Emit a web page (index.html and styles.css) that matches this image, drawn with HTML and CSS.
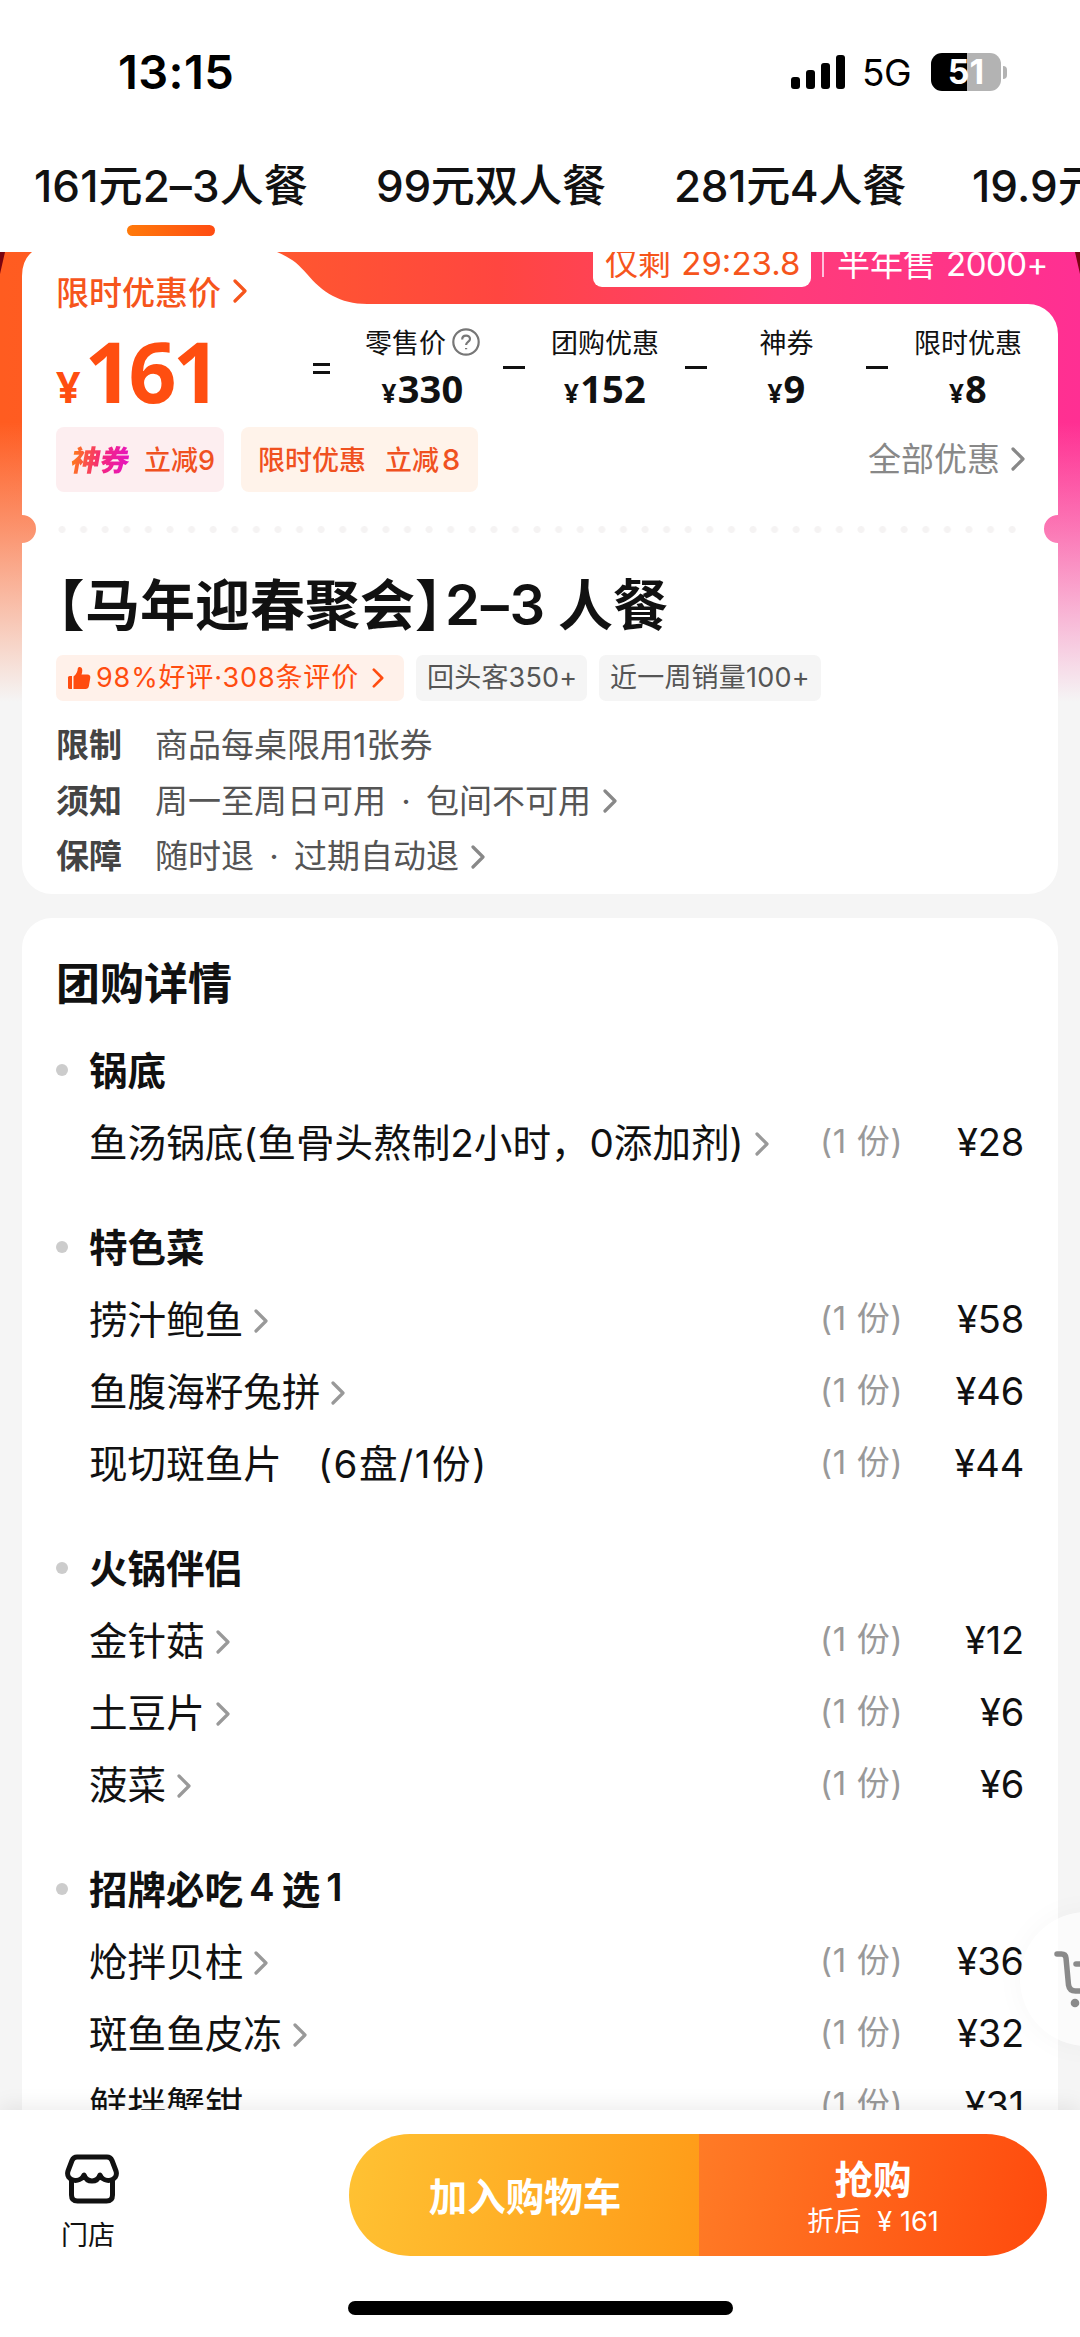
FILE: index.html
```html
<!DOCTYPE html>
<html lang="zh-CN">
<head>
<meta charset="utf-8">
<title>团购详情</title>
<link rel="stylesheet" href="styles.css">
</head>
<body>
<svg class="defs" width="0" height="0" aria-hidden="true">
  <symbol id="chev" viewBox="0 0 14 24"><path d="M2 2l10 10L2 22" fill="none" stroke="currentColor" stroke-width="3.2" stroke-linecap="round" stroke-linejoin="round"/></symbol>
</svg>
<div class="phone">
  <header class="status">
    <span class="time">13:15</span>
    <div class="status-right">
      <svg class="signal" viewBox="0 0 54 34"><rect x="0" y="22" width="9" height="12" rx="3"/><rect x="15" y="15" width="9" height="19" rx="3"/><rect x="30" y="8" width="9" height="26" rx="3"/><rect x="45" y="0" width="9" height="34" rx="3"/></svg>
      <span class="net">5G</span>
      <span class="battery">51</span><span class="nub"></span>
    </div>
  </header>
  <nav class="tabs">
    <span class="tab active">161元2–3人餐</span>
    <span class="tab t2">99元双人餐</span>
    <span class="tab t3">281元4人餐</span>
    <span class="tab t4">19.9元</span>
  </nav>

  <main class="content">
    <div class="corner left"></div><div class="corner right"></div>
    <div class="sale"><span class="count">仅剩 <b>29:23.8</b></span><span class="sold"><i></i>半年售 <b>2000+</b></span></div>
    <section class="deal">
      <div class="promo">限时优惠价<svg class="chev"><use href="#chev"/></svg></div>
      <div class="price-row">
        <div class="price"><small>¥</small>161</div>
        <span class="op eq"></span>
        <div class="part p1"><span>零售价<svg class="help" viewBox="0 0 28 28"><circle cx="14" cy="14" r="12.7"/><path d="M10.2 11.4c0-5 7.8-5 7.8-.5 0 3-3.900 3-3.900 6"/><path d="M14.1 20v1.2"/></svg></span><strong><small>¥</small>330</strong></div>
        <span class="op"></span>
        <div class="part p2"><span>团购优惠</span><strong><small>¥</small>152</strong></div>
        <span class="op"></span>
        <div class="part p3"><span>神券</span><strong><small>¥</small>9</strong></div>
        <span class="op"></span>
        <div class="part p4"><span>限时优惠</span><strong><small>¥</small>8</strong></div>
      </div>
      <div class="coupons">
        <span class="coupon pink"><em>神券</em><span>立减9</span></span>
        <span class="coupon peach"><span>限时优惠</span><span>立减<b>8</b></span></span>
        <span class="all">全部优惠<svg class="chev"><use href="#chev"/></svg></span>
      </div>
      <div class="dots"></div>
      <h1><span class="lb">【</span>马年迎春聚会<span class="rb">】</span><span class="num">2–3</span><span class="last">人餐</span></h1>
      <div class="tags">
        <span class="tag hot"><svg class="thumb" viewBox="0 0 24 24"><path d="M1 11.5q0-1.500 1.500-1.500H5v13H2.500Q1 23 1 21.500z"/><path d="M6.500 10.500C9.500 8 10.500 5.500 10.700 3c.2-2.800 4.600-2.700 4.600 1.200 0 1.600-.3 3-.8 4.300h6c2 0 3.100 1.400 2.800 3.300l-1.400 8.200c-.3 2-1.500 3-3.400 3h-12z"/></svg><span>98%好评·308条评价</span><svg class="chev"><use href="#chev"/></svg></span>
        <span class="tag g1">回头客350+</span>
        <span class="tag g2">近一周销量100+</span>
      </div>
      <dl class="rules">
        <div><dt>限制</dt><dd>商品每桌限用1张券</dd></div>
        <div><dt>须知</dt><dd>周一至周日可用<i>·</i>包间不可用<svg class="chev"><use href="#chev"/></svg></dd></div>
        <div><dt>保障</dt><dd>随时退<i>·</i>过期自动退<svg class="chev"><use href="#chev"/></svg></dd></div>
      </dl>
    </section>

    <section class="detail">
      <h2>团购详情</h2>
      <div class="group">
        <h3>锅底</h3>
        <div class="item"><span class="name">鱼汤锅底(鱼骨头熬制2小时，0添加剂)<svg class="chev"><use href="#chev"/></svg></span><span class="qty">(1 份)</span><span class="cost">¥28</span></div>
      </div>
      <div class="group">
        <h3>特色菜</h3>
        <div class="item"><span class="name">捞汁鲍鱼<svg class="chev"><use href="#chev"/></svg></span><span class="qty">(1 份)</span><span class="cost">¥58</span></div>
        <div class="item"><span class="name">鱼腹海籽兔拼<svg class="chev"><use href="#chev"/></svg></span><span class="qty">(1 份)</span><span class="cost">¥46</span></div>
        <div class="item"><span class="name">现切斑鱼片<span class="spec">(6盘/1份)</span></span><span class="qty">(1 份)</span><span class="cost">¥44</span></div>
      </div>
      <div class="group">
        <h3>火锅伴侣</h3>
        <div class="item"><span class="name">金针菇<svg class="chev"><use href="#chev"/></svg></span><span class="qty">(1 份)</span><span class="cost">¥12</span></div>
        <div class="item"><span class="name">土豆片<svg class="chev"><use href="#chev"/></svg></span><span class="qty">(1 份)</span><span class="cost">¥6</span></div>
        <div class="item"><span class="name">菠菜<svg class="chev"><use href="#chev"/></svg></span><span class="qty">(1 份)</span><span class="cost">¥6</span></div>
      </div>
      <div class="group">
        <h3>招牌必吃<span class="four">4</span>选<span class="one">1</span></h3>
        <div class="item"><span class="name">炝拌贝柱<svg class="chev"><use href="#chev"/></svg></span><span class="qty">(1 份)</span><span class="cost">¥36</span></div>
        <div class="item"><span class="name">斑鱼鱼皮冻<svg class="chev"><use href="#chev"/></svg></span><span class="qty">(1 份)</span><span class="cost">¥32</span></div>
        <div class="item"><span class="name">鲜拌蟹钳</span><span class="qty">(1 份)</span><span class="cost">¥31</span></div>
      </div>
    </section>
    <div class="cart"><svg viewBox="0 0 60 60"><path d="M3 5h4.500q4 0 4.500 4l2.500 27q1 6 7 6h22"/><path d="M22 15h30"/><circle cx="21" cy="54" r="4.300"/></svg></div>
  </main>

  <footer class="bar">
    <div class="shop">
      <svg viewBox="0 0 54 50"><path d="M12 3h30q3.500 0 5 3.500l4 10.500c3 10-12 13-16 4-3 8-13 8-16 0-4 9-19 6-16-4L7 6.500Q8.500 3 12 3z"/><path d="M6.500 25v16q0 6 6 6h29q6 0 6-6V25"/></svg>
      <span>门店</span>
    </div>
    <div class="buttons">
      <div class="btn add">加入购物车</div>
      <div class="btn buy"><strong>抢购</strong><span>折后<i>¥</i>161</span></div>
    </div>
  </footer>
  <div class="home"></div>
</div>
</body>
</html>
```
FILE: styles.css
```css
* { box-sizing: border-box; margin: 0; padding: 0; }
body { width: 1080px; height: 2337px; overflow: hidden; background: #fff; color: #111; font-family: Inter, "Noto Sans CJK SC", sans-serif; white-space: nowrap; }
i, em { font-style: normal; }
.defs { position: absolute; }
.phone { display: flex; flex-direction: column; height: 2337px; overflow: hidden; }
.chev { width: 14px; height: 24px; flex: none; }

.status { height: 144px; padding: 0 73px 0 118px; display: flex; align-items: center; justify-content: space-between; color: #000; }
.time { font-size: 47px; font-weight: 600; letter-spacing: .4px; padding-bottom: 1px; }
.status-right { display: flex; align-items: center; }
.signal { width: 54px; height: 34px; margin-right: 17px; }
.net { font-size: 37px; width: 52px; letter-spacing: -.5px; margin-right: 17px; }
.battery { width: 70px; height: 38px; border-radius: 11px; background: linear-gradient(90deg, #000 51%, #b3b3b3 51%); color: #fff; font-size: 34px; font-weight: 700; line-height: 38px; text-align: center; }
.nub { width: 4px; height: 13px; margin-left: 2px; border-radius: 0 4px 4px 0; background: #b3b3b3; }

.tabs { height: 108px; display: flex; gap: 70px; padding: 12px 0 0 34px; overflow: hidden; }
.tab { position: relative; flex: none; font-size: 44px; font-weight: 500; line-height: 60px; width: 272px; letter-spacing: .1px; }
.tab.t2, .tab.t3 { width: 228px; letter-spacing: -.3px; }
.tab.active::after { content: ""; position: absolute; left: 93px; bottom: 16px; width: 88px; height: 11px; border-radius: 6px; background: linear-gradient(90deg, #ff7a0a, #ff4c12); }

.content { position: relative; height: 1858px; overflow: hidden; padding: 0 22px; display: flex; flex-direction: column; gap: 24px;
  background: linear-gradient(rgba(245,245,245,0) 170px, rgba(245,245,245,.36) 277px, #f5f5f5 450px), linear-gradient(90deg, #ff5c20, #ff5a2c 22%, #ff4640 46%, #ff3c78 72%, #ff2f93 100%); background-color: #f5f5f5; background-size: 100% 450px; background-repeat: no-repeat; }
.corner { position: absolute; top: 0; width: 5px; height: 22px; background: #7a0410; }
.corner.left { left: 0; clip-path: polygon(0 0, 100% 0, 0 100%); }
.corner.right { right: 0; clip-path: polygon(0 0, 100% 0, 100% 100%); }
.sale { position: absolute; z-index: 1; top: -12px; left: 593px; display: flex; font-size: 33px; line-height: 48px; color: #fff; }
.sale b { font-weight: 400; }
.count { width: 218px; height: 47px; padding-left: 12px; border-radius: 9px; background: #fff; color: #f6551c; line-height: 46px; }
.count b { letter-spacing: 0; margin-left: 1px; }
.sold { display: flex; align-items: center; line-height: 46px; }
.sold i { width: 2px; height: 26px; margin: 0 13px 0 11px; background: #ffc0dc; }
.sold b { margin-left: 10px; letter-spacing: -.5px; }

.deal { flex: none; height: 642px; background: #fff; padding: 19px 33px 0 34px; display: flex; flex-direction: column;
  clip-path: path("M10 0H255C271 7 276 12 285 22C300 40 318 52 345 52H1006A30 30 0 0 1 1036 82V263A14 14 0 0 0 1036 291V612A30 30 0 0 1 1006 642H30A30 30 0 0 1 0 612V291A14 14 0 0 0 0 263V24Q0 8 10 0Z"); }
.promo { height: 40px; display: flex; align-items: center; gap: 12px; color: #f6551c; font-size: 33px; font-weight: 500; }
.price-row { height: 115px; display: flex; align-items: flex-start; }
.price-row > * { flex: none; }
.price { width: 257px; height: 115px; padding-top: 10px; color: #ff4e10; font: 700 84px/100px "Open Sans"; letter-spacing: -4px; }
.price small { font-size: 43px; margin-right: 4px; letter-spacing: 0; }
.op { width: 22px; height: 3px; margin-top: 55px; background: #111; }
.op.eq { width: 17px; height: 11px; margin-top: 52px; border: solid #111; border-width: 3px 0; background: none; }
.part { height: 100px; display: flex; flex-direction: column; align-items: center; padding-top: 11px; }
.part > span { display: flex; align-items: center; height: 40px; font-size: 27px; gap: 6px; }
.part strong { font: 700 38px/54px "Open Sans"; height: 54px; letter-spacing: .2px; }
.part small { font-size: 26px; margin-right: 1px; }
.p1 { width: 173px; padding-left: 12px; } .p2 { width: 160px; } .p3 { width: 159px; } .p4 { width: 160px; }
.help { width: 28px; height: 28px; fill: none; stroke: #777; stroke-width: 2.200; }

.coupons { height: 65px; margin-top: 1px; display: flex; align-items: center; color: #f0511f; }
.coupon { height: 65px; display: flex; align-items: center; border-radius: 8px; font-size: 27px; font-weight: 500; padding-bottom: 3px; }
.pink { width: 168px; background: #fdeef0; padding-left: 16px; margin-right: 17px; }
.pink em { width: 60px; font-size: 29px; font-weight: 900; transform: skewX(-10deg); background: linear-gradient(90deg, #ff7a1a, #f5267c 50%, #e413c8); -webkit-background-clip: text; color: transparent; margin-right: 12px; }
.peach { width: 237px; background: #fff3ea; padding-left: 17px; gap: 19px; }
.peach b { font-weight: 500; margin-left: 3px; font-size: 29px; }
.all { margin-left: auto; display: flex; align-items: center; gap: 11px; color: #888; font-size: 33px; padding-bottom: 5px; }
.all .chev { margin-top: 4px; }
.dots { height: 7px; margin-top: 34px; width: 966px; background: radial-gradient(circle at 4px 3.5px, #f5f3f3 3px, transparent 4px) 2px 0 / 21.6px 7px repeat-x; }

h1 { height: 80px; margin-top: 32px; display: flex; font-size: 55px; line-height: 80px; font-weight: 700; }
.lb, .rb { font-feature-settings: "halt"; width: 28px; }
.lb { margin-left: 1px; } .rb { width: 30px; }
.num { width: 113px; font-weight: 600; font-size: 56px; letter-spacing: .8px; }
.tags { margin-top: 10px; height: 46px; display: flex; gap: 12px; font-size: 27px; color: #555; }
.tag { height: 46px; line-height: 46px; padding-left: 11px; background: #f5f5f5; border-radius: 7px; letter-spacing: .2px; }
.hot { width: 348px; display: flex; align-items: center; background: #fff1ea; color: #ff4c10; }
.hot span { width: 276px; margin-left: 5px; letter-spacing: .85px; }
.hot .chev { height: 20px; width: 12px; }
.thumb { width: 24px; height: 24px; fill: #ff4c10; }
.g1 { width: 171px; } .g2 { width: 222px; }
.rules { margin-top: 17px; font-size: 33px; color: #555; }
.rules div { display: flex; height: 55.500px; line-height: 55.500px; }
dt { width: 99px; font-weight: 600; color: #444; font-size: 33px; }
dd { display: flex; align-items: center; }
dd i { width: 40px; text-align: center; }
dd .chev { margin-left: 12px; color: #888; }

.detail { flex: none; height: 1260px; border-radius: 30px; background: #fff; padding: 36px 34px 0 34px; }
h2 { font-size: 44px; line-height: 60px; font-weight: 700; }
.group { padding-top: 21px; margin-bottom: 12px; }
h3 { display: flex; align-items: center; height: 72px; font-size: 38.500px; font-weight: 700; padding-bottom: 6px; }
h3::before { content: ""; width: 12px; height: 12px; border-radius: 50%; background: #ccc; margin: 3px 21px 0 0; }
.four { margin: 0 7px 0 6px; font-weight: 600; } .one { margin-left: 6px; font-weight: 600; }
.item { height: 72px; display: flex; align-items: center; padding: 0 0 6px 33px; font-size: 38.600px; }
.name { display: flex; align-items: center; flex: 1; }
.name .chev { margin: 7px 0 0 11px; color: #999; }
.spec { margin-left: 36px; letter-spacing: 1.600px; }
.qty { width: 83px; font-size: 33px; color: #999; padding-bottom: 2px; letter-spacing: .7px; }
.cost { width: 121px; text-align: right; font-size: 38px; letter-spacing: -.2px; padding-top: 3px; }
.cart { position: absolute; left: 1020px; top: 1660px; width: 134px; height: 134px; border-radius: 50%; background: rgba(255,255,255,.6); box-shadow: 0 0 30px rgba(0,0,0,.035); }
.cart svg { position: absolute; left: 34px; top: 37px; width: 60px; height: 60px; fill: none; stroke: #8a8a8a; stroke-width: 5.500; stroke-linecap: round; }
.cart circle { fill: #8a8a8a; stroke: none; }

.bar { height: 170px; position: relative; background: #fff; display: flex; padding: 24px 33px 0 61px; justify-content: space-between; box-shadow: 0 -4px 20px rgba(0,0,0,.08); clip-path: inset(-30px 0 0 0); }
.shop { width: 60px; padding-top: 20px; font-size: 27px; }
.shop svg { display: block; width: 54px; height: 50px; margin-left: 4px; fill: none; stroke: #111; stroke-width: 5; stroke-linejoin: round; }
.shop span { display: block; line-height: 40px; margin-top: 12px; }
.buttons { width: 698px; height: 122px; border-radius: 61px; display: flex; overflow: hidden; color: #fff; }
.btn { flex: 1; display: flex; flex-direction: column; align-items: center; justify-content: center; font-size: 38.500px; font-weight: 600; }
.add { background: linear-gradient(100deg, #ffc233, #ff9b18); padding: 0 0 3px 2px; }
.buy { background: linear-gradient(100deg, #ff7b26, #ff4a0d); padding-top: 9px; }
.btn strong { line-height: 44px; font-weight: 700; }
.buy span { font-size: 27px; font-weight: 400; line-height: 40px; }
.buy i { margin: 0 8px 0 16px; }
.home { margin: 21px 0 0 348px; width: 385px; height: 14px; border-radius: 7px; background: #000; }
```
